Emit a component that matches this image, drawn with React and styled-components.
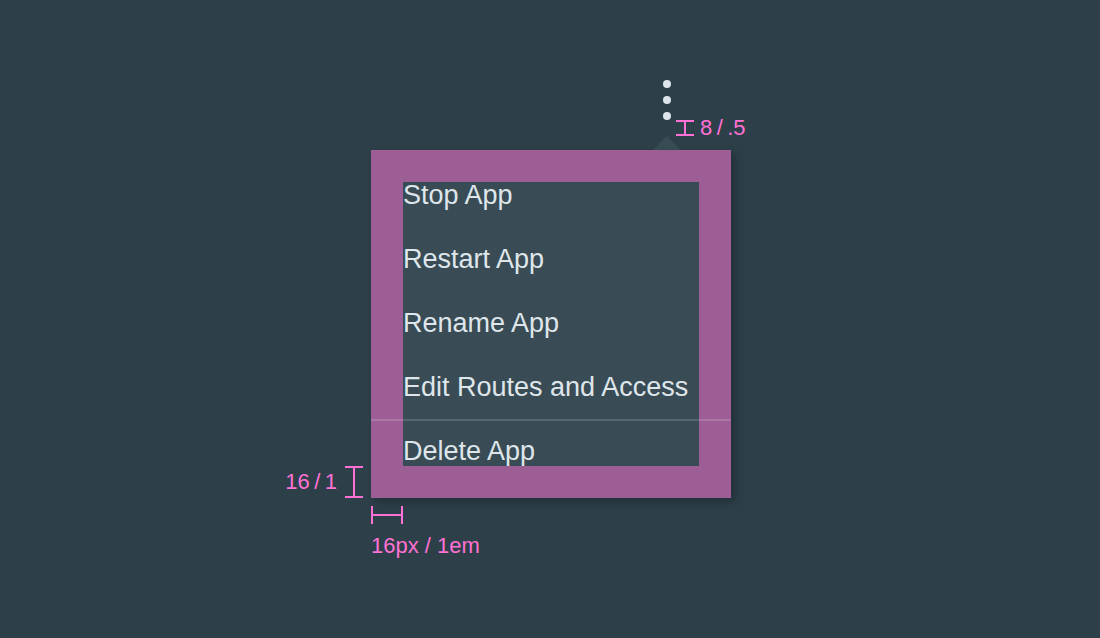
import React from "react";
import styled, { createGlobalStyle, css } from "styled-components";

const color = {
  page: "#2d3f49",
  panel: "#394b54",
  spacing: "#9c5e94",
  measure: "#ff71d4",
  text: "#dfe6eb",
};

const GlobalStyle = createGlobalStyle`
  * { box-sizing: border-box; }
  body {
    margin: 0;
    background: ${color.page};
    color: ${color.text};
    font-family: "Liberation Sans", Arial, sans-serif;
  }
`;

const Page = styled.main`
  display: grid;
  grid-template-columns: 1fr 360px 1fr;
  padding: 80px 0 80px 2px;
`;

const TriggerRow = styled.div`
  grid-column: 2 / 4;
  display: flex;
  align-items: flex-start;
  height: 70px;
  padding-left: 282px;
`;

const Trigger = styled.div`
  display: flex;
  flex-direction: column;
  align-items: center;
  justify-content: space-between;
  height: 70px;
  width: 28px;
`;

const KebabButton = styled.button`
  display: flex;
  flex-direction: column;
  gap: 8px;
  padding: 0;
  border: 0;
  background: none;
  cursor: pointer;
`;

const Dot = styled.span`
  width: 8px;
  height: 8px;
  border-radius: 50%;
  background: ${color.text};
`;

const Caret = styled.span`
  border: solid transparent;
  border-width: 0 14px 14px;
  border-bottom-color: ${color.panel};
`;

const GapNote = styled.div`
  display: flex;
  align-items: center;
  gap: 6px;
  padding-top: 34px;
  margin-left: -5px;
`;

const HeightNote = styled.div`
  display: flex;
  align-items: center;
  justify-content: flex-end;
  align-self: end;
  gap: 8px;
  height: 32px;
  padding-right: 8px;
`;

const WidthNote = styled.div`
  grid-column: 2;
  display: flex;
  flex-direction: column;
  align-items: flex-start;
  gap: 8px;
  padding-top: 8px;
`;

const Label = styled.span`
  color: ${color.measure};
  font-size: 22px;
  line-height: 28px;
  white-space: nowrap;
`;

const Bracket = styled.span`
  display: block;
  flex: none;
  ${(p) =>
    p.$across
      ? css`
          width: ${p.$size}px;
          height: 18px;
          border: solid ${color.measure};
          border-width: 0 2px;
          background: linear-gradient(${color.measure}, ${color.measure}) center / 100% 2px no-repeat;
        `
      : css`
          width: 18px;
          height: ${p.$size}px;
          border: solid ${color.measure};
          border-width: 2px 0;
          background: linear-gradient(${color.measure}, ${color.measure}) center / 2px 100% no-repeat;
        `}
`;

const Menu = styled.ul`
  grid-column: 2;
  display: flex;
  flex-direction: column;
  margin: 0;
  padding: 0 0 2px;
  border: 32px solid ${color.spacing};
  background: ${color.panel};
  box-shadow: 4px 4px 8px rgba(0, 0, 0, 0.25);
  list-style: none;
`;

const Item = styled.li`
  display: flex;

  & + & {
    margin-top: 38px;
  }
`;

const Divider = styled.li`
  height: 2px;
  margin: 19px -32px 17px;
  background: rgba(255, 255, 255, 0.15);
`;

const ItemButton = styled.button`
  padding: 0;
  border: 0;
  background: none;
  color: inherit;
  font: 27px / 26px "Liberation Sans", Arial, sans-serif;
  text-align: left;
  white-space: nowrap;
  cursor: pointer;
`;

const appActions = ["Stop App", "Restart App", "Rename App", "Edit Routes and Access"];

export default function App() {
  return (
    <>
      <GlobalStyle />
      <Page>
        <TriggerRow>
          <Trigger>
            <KebabButton type="button" aria-label="App actions">
              <Dot />
              <Dot />
              <Dot />
            </KebabButton>
            <Caret />
          </Trigger>
          <GapNote>
            <Bracket $size={16} />
            <Label>8{"\u2009"}/{"\u2009"}.5</Label>
          </GapNote>
        </TriggerRow>
        <HeightNote>
          <Label>16{"\u2009"}/{"\u2009"}1</Label>
          <Bracket $size={32} />
        </HeightNote>
        <Menu>
          {appActions.map((action) => (
            <Item key={action}>
              <ItemButton type="button">{action}</ItemButton>
            </Item>
          ))}
          <Divider role="separator" />
          <Item>
            <ItemButton type="button">Delete App</ItemButton>
          </Item>
        </Menu>
        <WidthNote>
          <Bracket $across $size={32} />
          <Label>16px / 1em</Label>
        </WidthNote>
      </Page>
    </>
  );
}
